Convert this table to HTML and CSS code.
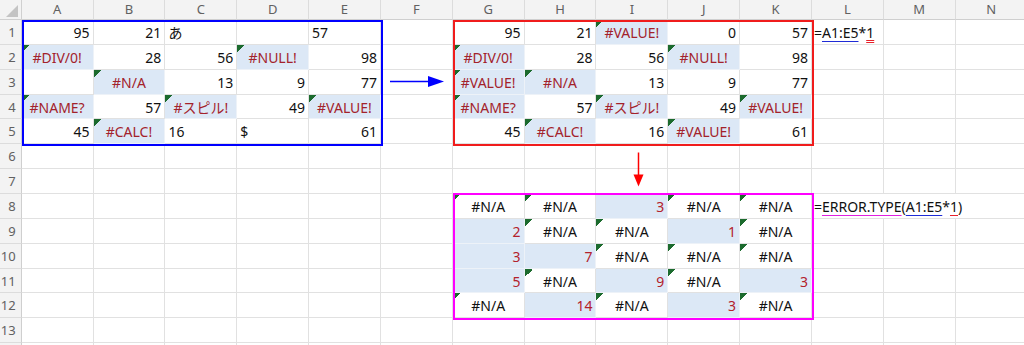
FILE: index.html
```html
<!DOCTYPE html>
<html lang="ja">
<head>
<meta charset="utf-8">
<title>ERROR.TYPE</title>
<link rel="stylesheet" href="styles.css">
</head>
<body>
<div class="wrap">
  <div class="sheet">
    <div class="corner"><svg width="12" height="12" viewBox="0 0 12 12"><polygon points="12,0 12,12 0,12" fill="#c4c4c4"/></svg></div>
    <div class="ch">A</div><div class="ch">B</div><div class="ch">C</div><div class="ch">D</div><div class="ch">E</div><div class="ch">F</div><div class="ch">G</div><div class="ch">H</div><div class="ch">I</div><div class="ch">J</div><div class="ch">K</div><div class="ch">L</div><div class="ch">M</div><div class="ch">N</div>

    <div class="rh">1</div>
    <div class="c r">95</div><div class="c r">21</div><div class="c">あ</div><div class="c"></div><div class="c">57</div><div class="c"></div>
    <div class="c r">95</div><div class="c r">21</div><div class="c e">#VALUE!</div><div class="c r">0</div><div class="c r">57</div>
    <div class="c f1">=<span class="u-blue">A1:E5</span>*<span class="u-red2">1</span></div><div class="c"></div><div class="c"></div>

    <div class="rh">2</div>
    <div class="c e">#DIV/0!</div><div class="c r">28</div><div class="c r">56</div><div class="c e">#NULL!</div><div class="c r">98</div><div class="c"></div>
    <div class="c e">#DIV/0!</div><div class="c r">28</div><div class="c r">56</div><div class="c e">#NULL!</div><div class="c r">98</div>
    <div class="c"></div><div class="c"></div><div class="c"></div>

    <div class="rh">3</div>
    <div class="c"></div><div class="c e">#N/A</div><div class="c r">13</div><div class="c r">9</div><div class="c r">77</div><div class="c"></div>
    <div class="c e">#VALUE!</div><div class="c e">#N/A</div><div class="c r">13</div><div class="c r">9</div><div class="c r">77</div>
    <div class="c"></div><div class="c"></div><div class="c"></div>

    <div class="rh">4</div>
    <div class="c e">#NAME?</div><div class="c r">57</div><div class="c e">#スピル!</div><div class="c r">49</div><div class="c e">#VALUE!</div><div class="c"></div>
    <div class="c e">#NAME?</div><div class="c r">57</div><div class="c e">#スピル!</div><div class="c r">49</div><div class="c e">#VALUE!</div>
    <div class="c"></div><div class="c"></div><div class="c"></div>

    <div class="rh">5</div>
    <div class="c r">45</div><div class="c e">#CALC!</div><div class="c">16</div><div class="c">$</div><div class="c r">61</div><div class="c"></div>
    <div class="c r">45</div><div class="c e">#CALC!</div><div class="c r">16</div><div class="c e">#VALUE!</div><div class="c r">61</div>
    <div class="c"></div><div class="c"></div><div class="c"></div>

    <div class="rh">6</div>
    <div class="c"></div><div class="c"></div><div class="c"></div><div class="c"></div><div class="c"></div><div class="c"></div><div class="c"></div><div class="c"></div><div class="c"></div><div class="c"></div><div class="c"></div><div class="c"></div><div class="c"></div><div class="c"></div>

    <div class="rh">7</div>
    <div class="c"></div><div class="c"></div><div class="c"></div><div class="c"></div><div class="c"></div><div class="c"></div><div class="c"></div><div class="c"></div><div class="c"></div><div class="c"></div><div class="c"></div><div class="c"></div><div class="c"></div><div class="c"></div>

    <div class="rh">8</div>
    <div class="c"></div><div class="c"></div><div class="c"></div><div class="c"></div><div class="c"></div><div class="c"></div>
    <div class="c na">#N/A</div><div class="c na">#N/A</div><div class="c v">3</div><div class="c na">#N/A</div><div class="c na">#N/A</div>
    <div class="c f2">=<span class="u-mag">ERROR.TYPE</span>(<span class="u-blue">A1:E5</span>*<span class="u-red">1</span>)</div>

    <div class="rh">9</div>
    <div class="c"></div><div class="c"></div><div class="c"></div><div class="c"></div><div class="c"></div><div class="c"></div>
    <div class="c v">2</div><div class="c na">#N/A</div><div class="c na">#N/A</div><div class="c v">1</div><div class="c na">#N/A</div>
    <div class="c"></div><div class="c"></div><div class="c"></div>

    <div class="rh">10</div>
    <div class="c"></div><div class="c"></div><div class="c"></div><div class="c"></div><div class="c"></div><div class="c"></div>
    <div class="c v">3</div><div class="c v">7</div><div class="c na">#N/A</div><div class="c na">#N/A</div><div class="c na">#N/A</div>
    <div class="c"></div><div class="c"></div><div class="c"></div>

    <div class="rh">11</div>
    <div class="c"></div><div class="c"></div><div class="c"></div><div class="c"></div><div class="c"></div><div class="c"></div>
    <div class="c v">5</div><div class="c na">#N/A</div><div class="c v">9</div><div class="c na">#N/A</div><div class="c v">3</div>
    <div class="c"></div><div class="c"></div><div class="c"></div>

    <div class="rh">12</div>
    <div class="c"></div><div class="c"></div><div class="c"></div><div class="c"></div><div class="c"></div><div class="c"></div>
    <div class="c na">#N/A</div><div class="c v">14</div><div class="c na">#N/A</div><div class="c v">3</div><div class="c na">#N/A</div>
    <div class="c"></div><div class="c"></div><div class="c"></div>

    <div class="rh">13</div>
    <div class="c"></div><div class="c"></div><div class="c"></div><div class="c"></div><div class="c"></div><div class="c"></div><div class="c"></div><div class="c"></div><div class="c"></div><div class="c"></div><div class="c"></div><div class="c"></div><div class="c"></div><div class="c"></div>

    <div class="rh"></div>
    <div class="c"></div><div class="c"></div><div class="c"></div><div class="c"></div><div class="c"></div><div class="c"></div><div class="c"></div><div class="c"></div><div class="c"></div><div class="c"></div><div class="c"></div><div class="c"></div><div class="c"></div><div class="c"></div>
  </div>

  <div class="overlay">
    <div class="box box-blue"></div>
    <div class="box box-red"></div>
    <div class="box box-mag"></div>
    <div class="arrow-right">
      <svg width="72" height="25" viewBox="0 0 72 25">
        <line x1="9" y1="11.5" x2="50" y2="11.5" stroke="#0000ff" stroke-width="1.5"/>
        <polygon points="47,6 63,11.5 47,17" fill="#0000ff"/>
      </svg>
    </div>
    <div class="arrow-down">
      <svg width="72" height="50" viewBox="0 0 72 50">
        <line x1="42.5" y1="8.5" x2="42.5" y2="33" stroke="#ff0000" stroke-width="1.5"/>
        <polygon points="37.5,30.5 47.5,30.5 42.5,42.5" fill="#ff0000"/>
      </svg>
    </div>
  </div>
</div>
</body>
</html>
```
FILE: styles.css
```css
html, body {
  margin: 0;
  padding: 0;
  overflow: hidden;
  background: #ffffff;
}

.wrap {
  display: grid;
  width: 1024px;
  height: 345px;
  overflow: hidden;
  font-family: "Noto Sans", "Noto Sans CJK JP", sans-serif;
}

.sheet,
.overlay {
  grid-area: 1 / 1;
  display: grid;
  grid-template-columns: 21.7px repeat(14, 71.85px);
  grid-template-rows: 20px repeat(14, 24.87px);
}

.overlay {
  pointer-events: none;
}

/* headers */
.corner {
  background: #f3f3f3;
  border-right: 1px solid #d0d0d0;
  border-bottom: 1px solid #d0d0d0;
  box-sizing: border-box;
  display: flex;
  align-items: flex-end;
  justify-content: flex-end;
  padding: 0 3px 2px 0;
}

.ch {
  background: #f3f3f3;
  color: #616161;
  font-size: 13px;
  line-height: 19px;
  text-align: center;
  border-right: 1px solid #dcdcdc;
  border-bottom: 1px solid #cfcfcf;
  box-sizing: border-box;
}

.rh {
  background: #f3f3f3;
  color: #616161;
  font-size: 13px;
  line-height: 24px;
  text-align: right;
  padding-right: 5px;
  border-right: 1px solid #cfcfcf;
  border-bottom: 1px solid #dcdcdc;
  box-sizing: border-box;
}

/* cells */
.c {
  box-sizing: border-box;
  border-right: 1px solid #e1e1e1;
  border-bottom: 1px solid #e1e1e1;
  padding: 2px 3px 0 3px;
  font-size: 14px;
  line-height: 22px;
  color: #111111;
  white-space: nowrap;
  overflow: visible;
  min-width: 0;
}

.r {
  text-align: right;
}

.e {
  text-align: center;
  color: #a3222b;
  background: linear-gradient(135deg, #1c6b2e 50%, transparent 50%) no-repeat 0 0 / 8px 8px, #dce8f6;
  border-color: #edf2f8;
}

.na {
  text-align: center;
  color: #111111;
  background: linear-gradient(135deg, #1c6b2e 50%, transparent 50%) no-repeat 0 0 / 8px 8px;
}

.v {
  text-align: right;
  color: #b3222c;
  background: #dce8f6;
  border-color: #edf2f8;
}

.f1 {
  padding-left: 2px;
}

.f2 {
  grid-column: span 3;
  padding-left: 2px;
}

.u-blue {
  text-decoration: underline;
  text-decoration-color: #1f2bd6;
  text-decoration-thickness: 1.4px;
  text-underline-offset: 3px;
}

.u-red2 {
  text-decoration: underline double;
  text-decoration-color: #e8202a;
  text-decoration-thickness: 1px;
  text-underline-offset: 2px;
}

.u-red {
  text-decoration: underline;
  text-decoration-color: #e8202a;
  text-decoration-thickness: 1.4px;
  text-underline-offset: 3px;
}

.u-mag {
  text-decoration: underline;
  text-decoration-color: #e020e0;
  text-decoration-thickness: 1.4px;
  text-underline-offset: 3px;
}

/* overlay boxes */
.box {
  border: 2px solid;
  box-sizing: border-box;
}

.box-blue {
  grid-column: 2 / 7;
  grid-row: 2 / 7;
  border-color: #0000ff;
  margin: 0 -2px -1.5px 0;
}

.box-red {
  grid-column: 8 / 13;
  grid-row: 2 / 7;
  border-color: #f01c1c;
  margin: 0 -2px -1.5px 0;
}

.box-mag {
  grid-column: 8 / 13;
  grid-row: 9 / 14;
  border-color: #ff00ff;
  margin: -1px -2px -2px 0;
}

.arrow-right {
  grid-column: 7;
  grid-row: 4;
}

.arrow-down {
  grid-column: 10;
  grid-row: 7 / 9;
}

.arrow-right svg,
.arrow-down svg {
  display: block;
}
```
